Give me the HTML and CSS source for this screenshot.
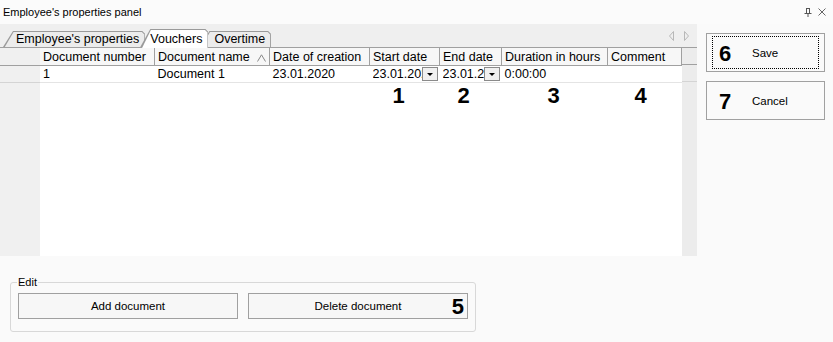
FILE: index.html
```html
<!DOCTYPE html>
<html lang="en">
<head>
    <meta charset="UTF-8">
    <title>Employee's properties panel</title>
    <link rel="stylesheet" href="styles.css">
</head>
<body>
    <div class="titlebar">
        <span class="title">Employee's properties panel</span>
        <span class="title-icons">
            <svg width="10" height="10" viewBox="0 0 10 10">
                <path d="M3 1.5 H7 M3.5 1.5 V6 M6.5 1.5 V6 M1.5 6.5 H8.5 M5 6.5 V10" fill="none" stroke="#555"/>
            </svg>
            <svg width="10" height="10" viewBox="0 0 10 10">
                <path d="M1.5 1.5 L8.5 8.5 M8.5 1.5 L1.5 8.5" fill="none" stroke="#666"/>
            </svg>
        </span>
    </div>

    <div class="content">
        <div class="workspace">
            <div class="tabs">
                <div class="tab first">Employee's properties</div>
                <div class="tab active">Vouchers</div>
                <div class="tab last">Overtime</div>
                <div class="tab-arrows">
                    <svg width="26" height="12" viewBox="0 0 26 12">
                        <path d="M7.5 1.5 L3.5 6 L7.5 10.5 Z" fill="none" stroke="#b8b8b8"/>
                        <path d="M18.5 1.5 L22.5 6 L18.5 10.5 Z" fill="none" stroke="#b8b8b8"/>
                    </svg>
                </div>
            </div>

            <div class="grid">
                <div class="row-head"></div>
                <div class="table-wrap">
                    <table class="table">
                        <thead>
                            <tr>
                                <th class="c1">Document number</th>
                                <th class="c2">Document name
                                    <svg class="sort" width="9" height="8" viewBox="0 0 9 8">
                                        <path d="M0.5 7.5 L4.5 0.8 L8.5 7.5" fill="none" stroke="#888"/>
                                    </svg>
                                </th>
                                <th class="c3">Date of creation</th>
                                <th class="c4">Start date</th>
                                <th class="c5">End date</th>
                                <th class="c6">Duration in hours</th>
                                <th class="c7">Comment</th>
                            </tr>
                        </thead>
                        <tbody>
                            <tr>
                                <td>1</td>
                                <td>Document 1</td>
                                <td>23.01.2020</td>
                                <td class="drop"><div class="drop-cell"><span class="clip">23.01.2020</span><span class="drop-btn"></span></div></td>
                                <td class="drop"><div class="drop-cell"><span class="clip">23.01.2020</span><span class="drop-btn"></span></div></td>
                                <td>0:00:00</td>
                                <td></td>
                            </tr>
                            <tr class="marks">
                                <td></td>
                                <td></td>
                                <td></td>
                                <td class="mark m1">1</td>
                                <td class="mark m2">2</td>
                                <td class="mark m3">3</td>
                                <td class="mark m4">4</td>
                            </tr>
                        </tbody>
                    </table>
                </div>
                <div class="grid-edge"></div>
            </div>
        </div>

        <div class="side">
            <button class="big-btn"><span class="num">6</span><span class="focus-ring"></span>Save</button>
            <button class="big-btn"><span class="num">7</span>Cancel</button>
        </div>
    </div>

    <div class="bottom">
        <fieldset class="group">
            <legend>Edit</legend>
            <div class="group-row">
                <button class="btn">Add document</button>
                <button class="btn">Delete document<span class="num-right">5</span></button>
            </div>
        </fieldset>
    </div>
</body>
</html>
```

FILE: styles.css
```css
body {
    margin: 0;
    width: 833px;
    height: 342px;
    overflow: hidden;
    background-color: #fafafa;
    font-family: "Liberation Sans", Arial, sans-serif;
    font-size: 12px;
    color: #000;
}
.titlebar {
    height: 24px;
    display: flex;
    justify-content: space-between;
    align-items: center;
    padding: 0 6px 0 3px;
    background-color: #fbfbfb;
    font-size: 11px;
}
.title-icons {
    display: flex;
    gap: 4px;
}
.content {
    display: flex;
}
.workspace {
    width: 697px;
    display: flex;
    flex-direction: column;
}

/* tabs */
.tabs {
    height: 23px;
    display: flex;
    align-items: flex-end;
    padding-left: 3px;
    background-color: #efefef;
    position: relative;
}
.tab {
    position: relative;
    z-index: 1;
    height: 16px;
    line-height: 17px;
    padding: 0 6px 0 15px;
    margin-left: -9px;
    font-size: 12.5px;
}
.tab::before,
.tab::after {
    content: "";
    position: absolute;
    left: 0;
    top: 0;
    right: 0;
    bottom: 0;
    z-index: -1;
}
.tab::before {
    background-color: #9a9a9a;
    clip-path: polygon(0 100%, 10px 0, calc(100% - 3px) 0, 100% 3px, 100% 100%);
}
.tab::after {
    background-color: #ececec;
    clip-path: polygon(1.8px 100%, 10.6px 1px, calc(100% - 3.4px) 1px, calc(100% - 1px) 3.4px, calc(100% - 1px) 100%);
}
.tab.first {
    margin-left: 0;
    padding-left: 13px;
    z-index: 2;
}
.tab.active {
    z-index: 3;
    height: 18px;
    line-height: 20px;
    margin-left: -5px;
    padding-left: 10px;
}
.tab.active::after {
    background-color: #fff;
    bottom: -1px;
}
.tab-arrows {
    position: absolute;
    right: 5px;
    top: 6px;
}

/* grid */
.grid {
    display: flex;
    height: 209px;
    background-color: #fff;
}
.row-head {
    width: 40px;
    background-color: #f0f0f0;
    border-top: 1px solid #a0a0a0;
    background-image: linear-gradient(#a0a0a0, #a0a0a0), linear-gradient(#d4d4d4, #d4d4d4);
    background-size: 100% 1px, 100% 1px;
    background-position: 0 17px, 0 34px;
    background-repeat: no-repeat;
}
.table-wrap {
    width: 642px;
}
.table {
    border-collapse: collapse;
    table-layout: fixed;
    width: 642px;
    font-size: 12.5px;
}
.table th {
    height: 17px;
    padding: 0 3px;
    text-align: left;
    font-weight: normal;
    background-color: #f7f7f7;
    border: 1px solid #a0a0a0;
    border-left: none;
    white-space: nowrap;
    overflow: hidden;
}
.table td {
    height: 16px;
    padding: 0 3px;
    border-bottom: 1px solid #e4e4e4;
    white-space: nowrap;
    overflow: hidden;
}
.c1 { width: 108px; }
.c2 { width: 108px; }
.c3 { width: 93px; }
.c4 { width: 63px; }
.c5 { width: 55px; }
.c6 { width: 99px; }
.c7 { width: 67px; }
.sort {
    float: right;
    margin-top: 4px;
}
.table td.drop {
    padding-right: 2px;
}
.drop-cell {
    display: flex;
    align-items: center;
}
.clip {
    flex: 1;
    overflow: hidden;
}
.drop-btn {
    position: relative;
    width: 14px;
    height: 12px;
    border: 1px solid #8a8a8a;
    background-color: #f0f0f0;
}
.drop-btn::after {
    content: "";
    position: absolute;
    left: 4px;
    top: 5px;
    border-left: 3px solid transparent;
    border-right: 3px solid transparent;
    border-top: 3px solid #000;
}
.marks td {
    border-bottom: none;
    height: 24px;
    vertical-align: middle;
}
.mark {
    font-size: 22px;
    font-weight: bold;
}
.table td.m1 { padding-left: 23px; }
.table td.m2 { padding-left: 18px; }
.table td.m3 { padding-left: 46px; }
.table td.m4 { padding-left: 27px; }
.grid-edge {
    width: 15px;
    background-color: #ececec;
    background-image: linear-gradient(#a0a0a0, #a0a0a0), linear-gradient(#a0a0a0, #a0a0a0), linear-gradient(#d4d4d4, #d4d4d4);
    background-size: 100% 1px, 100% 1px, 100% 1px;
    background-position: 0 0, 0 17px, 0 34px;
    background-repeat: no-repeat;
}

/* side buttons */
.side {
    flex: 1;
    display: flex;
    flex-direction: column;
    gap: 9px;
    padding: 9px 0 0 9px;
}
.big-btn {
    position: relative;
    width: 119px;
    height: 39px;
    border: 1px solid #a0a0a0;
    background-color: #fafafa;
    font-family: "Liberation Sans", Arial, sans-serif;
    font-size: 11.5px;
    text-align: left;
    padding: 0 0 0 45px;
}
.big-btn .num {
    position: absolute;
    left: 12px;
    top: 7px;
    font-size: 22px;
    font-weight: bold;
}
.focus-ring {
    position: absolute;
    left: 5px;
    top: 2px;
    right: 5px;
    bottom: 2px;
    border: 1px dotted #000;
}

/* edit group */
.bottom {
    padding: 20px 0 0 10px;
}
.group {
    width: 449px;
    margin: 0;
    padding: 5px 7px 12px 7px;
    border: 1px solid #d8d8d8;
    border-radius: 3px;
}
.group legend {
    padding: 0 1px;
    margin-left: -1px;
    font-size: 11px;
}
.group-row {
    display: flex;
    gap: 10px;
}
.btn {
    position: relative;
    width: 220px;
    height: 26px;
    border: 1px solid #a0a0a0;
    background-color: #f7f7f7;
    font-family: "Liberation Sans", Arial, sans-serif;
    font-size: 11.5px;
}
.num-right {
    position: absolute;
    right: 3px;
    top: 0;
    font-size: 22px;
    font-weight: bold;
}
```
